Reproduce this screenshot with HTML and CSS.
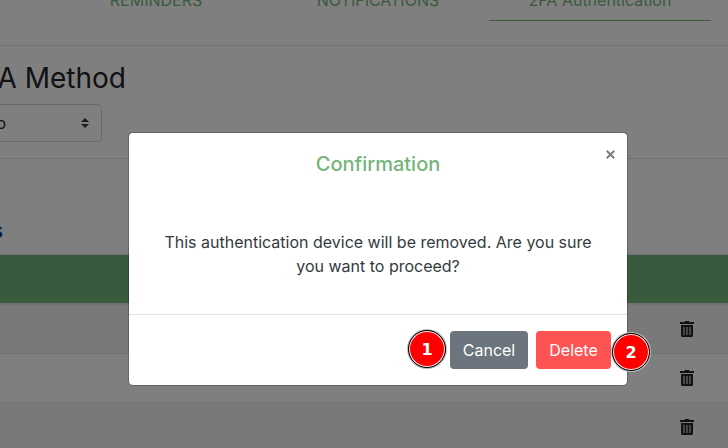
FILE: index.html
```html
<!DOCTYPE html>
<html lang="en">
<head>
<meta charset="utf-8">
<title>2FA Authentication</title>
<link rel="stylesheet" href="styles.css">
</head>
<body>
<svg class="defs" aria-hidden="true"><symbol id="trash" viewBox="0 0 14 16"><path fill-rule="evenodd" d="M0 1H4.500L5 0H9L9.500 1H14V3H0ZM1 4H13V14.500Q13 16 11.500 16H2.500Q1 16 1 14.500ZM3.500 6V14H4.500V6ZM6.500 6V14H7.500V6ZM9.500 6V14H10.500V6Z"/></symbol></svg>
<div class="page">
  <nav class="tabs">
    <a class="tab">REMINDERS</a>
    <a class="tab">NOTIFICATIONS</a>
    <a class="tab active">2FA Authentication</a>
  </nav>
  <section class="method">
    <h2><span>2FA Method</span></h2>
    <div class="select"><span>No</span><svg width="8" height="10" viewBox="0 0 4 5"><path d="M2 0L0 2h4zm0 5L0 3h4z"/></svg></div>
  </section>
  <section class="devices">
    <h3><span>Devices</span></h3>
    <div class="thead"></div>
    <div class="row"><svg class="trash"><use href="#trash"/></svg></div>
    <div class="row"><svg class="trash"><use href="#trash"/></svg></div>
    <div class="row"><svg class="trash"><use href="#trash"/></svg></div>
  </section>
</div>
<div class="backdrop">
  <div class="modal">
    <header><h5>Confirmation</h5><button class="close" aria-label="Close"><svg width="9" height="9" viewBox="0 0 9 9"><path d="M.7.7L8.300 8.300M8.300.7L.7 8.300"/></svg></button></header>
    <div class="body"><p>This authentication device will be removed. Are you sure<br>you want to proceed?</p></div>
    <footer><button class="btn cancel">Cancel</button><button class="btn delete">Delete</button></footer>
  </div>
</div>
<div class="mark one">1</div>
<div class="mark two">2</div>
</body>
</html>
```
FILE: styles.css
```css
* { box-sizing: border-box; }
body { margin: 0; width: 728px; height: 448px; overflow: hidden; font: 16px/24px Inter, sans-serif; color: #212529; background: #fff; }
h2, h3, h5, p { margin: 0; font-weight: 400; }
.defs { display: none; }
.page { height: 448px; overflow: hidden; }
.tabs { display: flex; height: 46px; border-bottom: 1px solid #dee2e6; padding-left: 45px; }
.tab { flex: 0 0 222px; height: 33px; margin-top: -12px; color: #74b57a; text-align: center; }
.tab.active { border-bottom: 1px solid #74b57a; }
.method { height: 113px; border-bottom: 1px solid #dee2e6; padding-top: 14px; }
h2 { width: 126px; font-size: 28px; line-height: 36px; display: flex; justify-content: flex-end; white-space: nowrap; }
.select { width: 202px; height: 38px; margin: 8px 0 0 -100px; border: 1px solid #ced4da; border-radius: 4px; display: flex; justify-content: flex-end; align-items: center; padding-right: 12px; gap: 75px; }
.select svg { fill: #343a40; }
.devices { padding-top: 56px; }
h3 { width: 3px; height: 39px; font-size: 21px; line-height: 31px; color: #003a78; font-weight: 500; display: flex; justify-content: flex-end; }
.thead { height: 51px; border-top: 1px solid #dee2e6; border-bottom: 2px solid #dee2e6; background: #74b57a; background-clip: padding-box; }
.row { height: 48px; display: flex; align-items: center; justify-content: flex-end; padding-right: 34.500px; background: #f2f2f2; }
.row + .row { height: 49px; border-top: 1px solid #dee2e6; }
.row:nth-of-type(3) { background: #fff; }
.trash { width: 14px; height: 16px; fill: #212529; }
.backdrop { position: absolute; inset: 0; background: rgba(0,0,0,.5); padding: 132px 0 0 128px; }
.modal { width: 500px; height: 254px; background: #fff; background-clip: padding-box; border: 1px solid rgba(0,0,0,.2); border-radius: 5px; display: flex; flex-direction: column; }
header { height: 82px; padding-top: 16px; position: relative; text-align: center; }
h5 { font-size: 20px; line-height: 30px; font-weight: 500; color: #74b57a; }
button { font: inherit; border: 0; }
.close { position: absolute; right: 9px; top: 13px; width: 16px; height: 16px; padding: 0; background: none; display: flex; align-items: center; justify-content: center; }
.close svg { stroke: #7f7f7f; stroke-width: 2; fill: none; }
.body { height: 99px; padding-top: 15px; text-align: center; color: #343a40; }
footer { flex: 1; border-top: 1px solid #dee2e6; display: flex; justify-content: flex-end; padding: 16px 16px 0 0; gap: 8px; }
.btn { height: 38px; padding: 0; border-radius: 4px; color: #fff; }
.cancel { width: 78px; background: #6c757d; }
.delete { width: 75px; background: #ff5252; }
.mark { position: absolute; width: 38px; height: 38px; border: 1.500px solid #000; border-radius: 50%; background: #f00; box-shadow: inset 0 0 0 1px #fff, 0 0 0 1px #bbb; color: #fff; font: bold 16px/37px "DejaVu Sans", sans-serif; text-align: center; }
.one { left: 408px; top: 330px; }
.two { left: 612px; top: 333px; }
```
